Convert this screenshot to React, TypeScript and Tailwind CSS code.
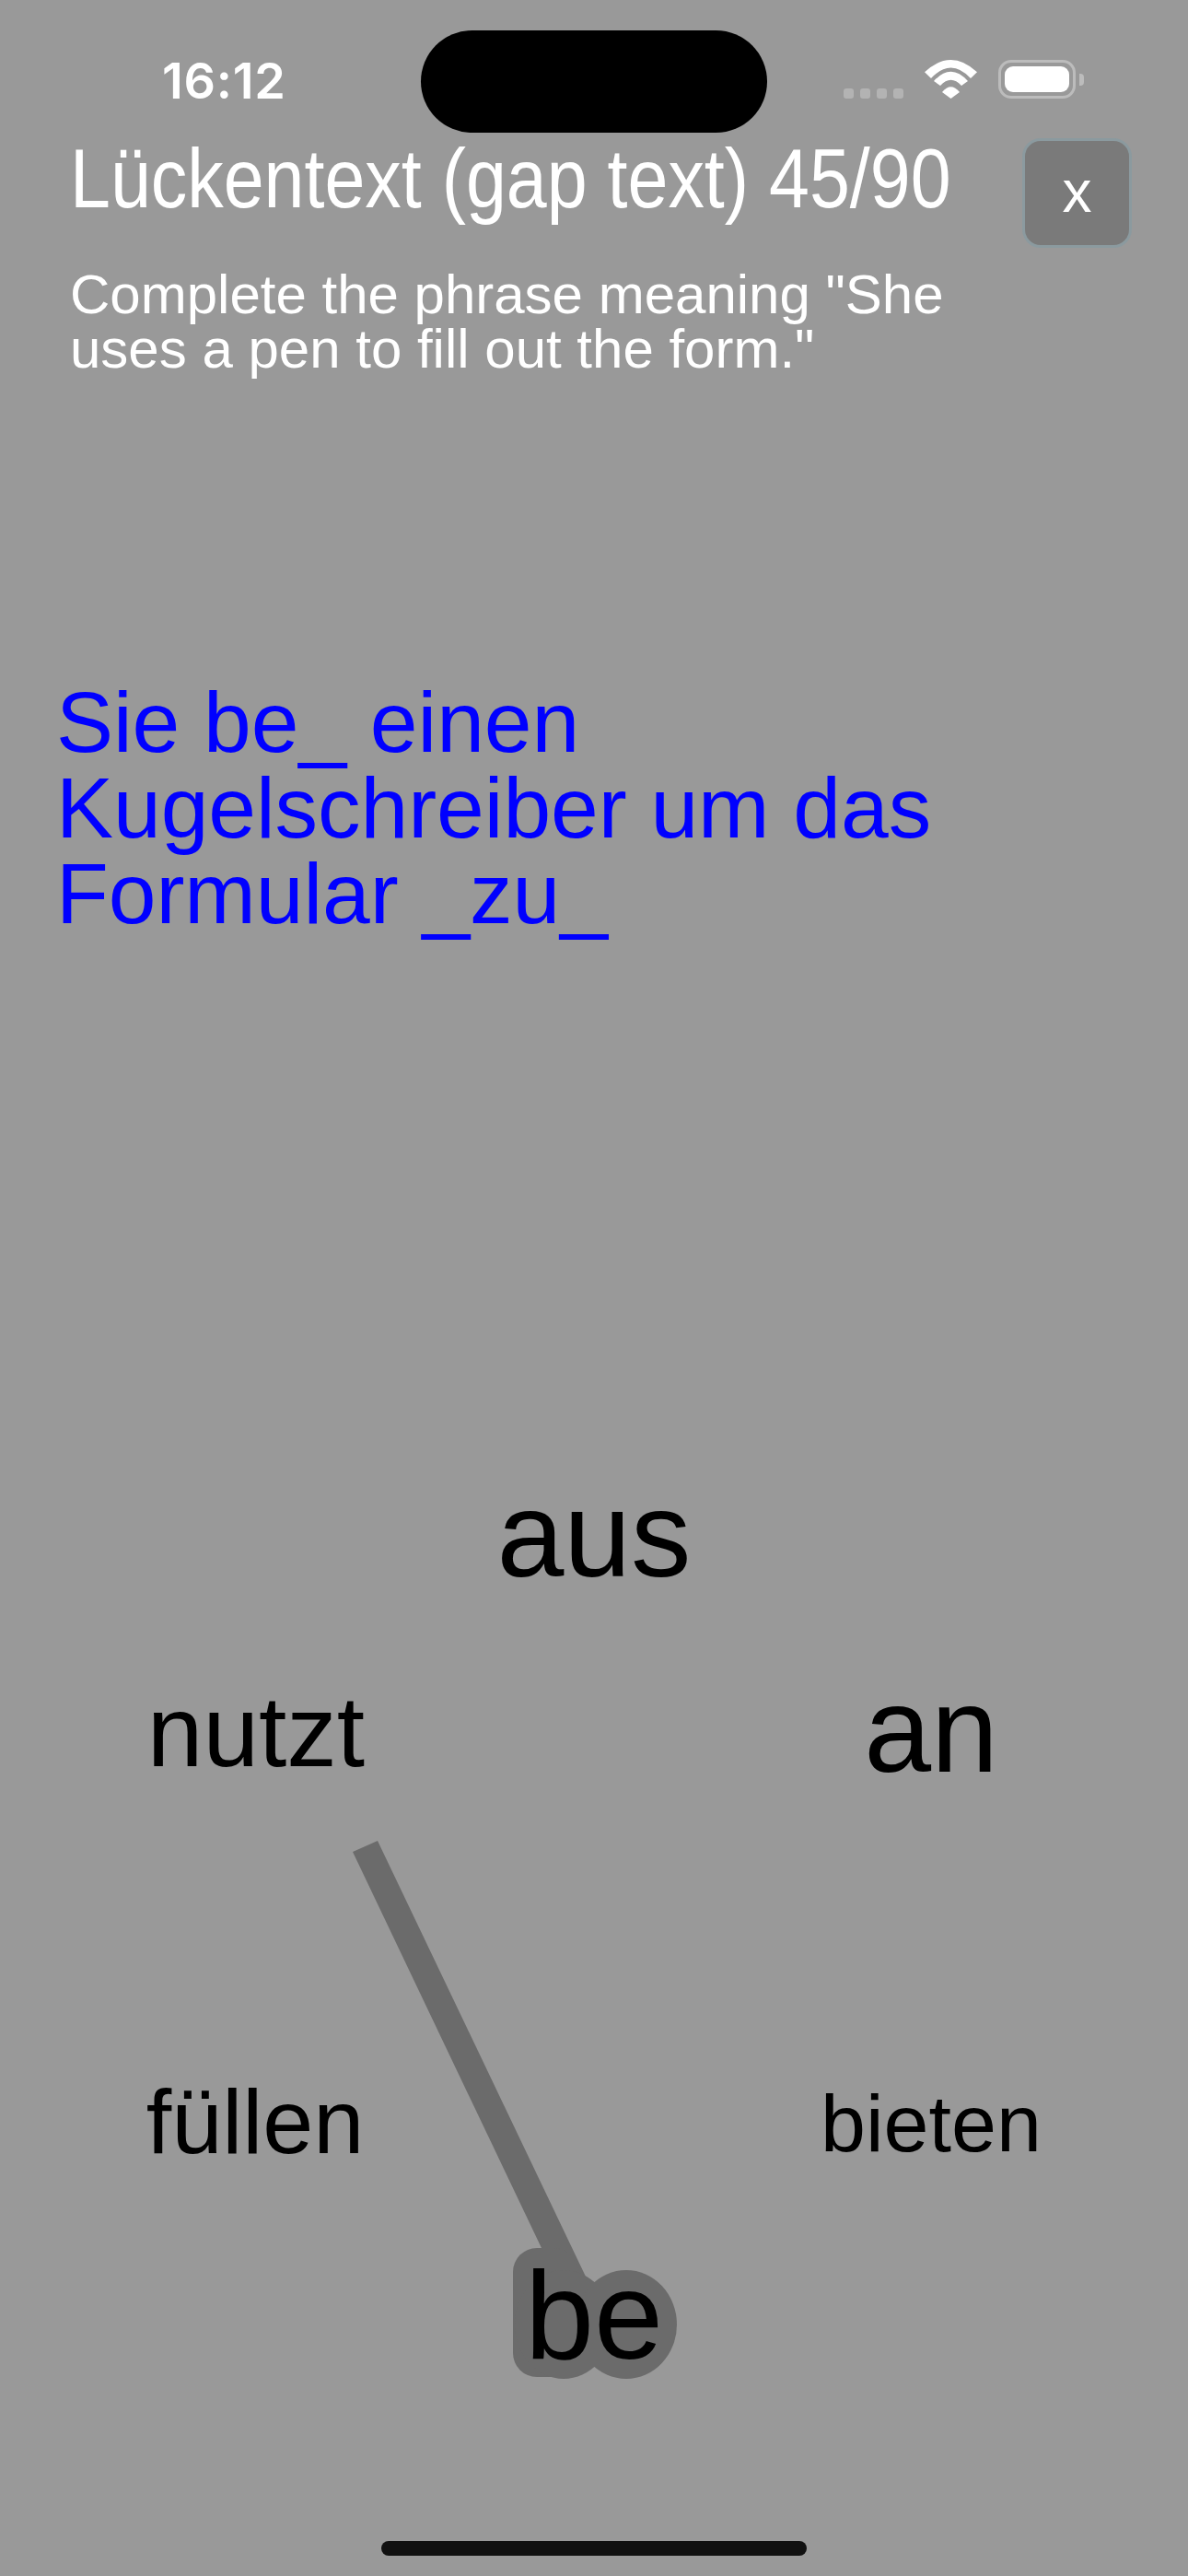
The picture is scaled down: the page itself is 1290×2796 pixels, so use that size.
export default function App() {
  return (
    <div className="relative flex h-[2796px] w-[1290px] flex-col overflow-hidden bg-[#999999] font-['Liberation_Sans',Arial,sans-serif]">
      {/* Status bar */}
      <div className="flex h-[150px] shrink-0 items-start justify-between pl-[176px] pr-[113px]">
        <span className="mt-[56px] font-['Inter',sans-serif] text-[54px] leading-[64px] font-semibold tracking-[0.7px] text-white">16:12</span>
        <div className="mt-[65px] flex h-[42px] items-end">
          <div className="flex items-end gap-[7px]">
            <span className="h-[11px] w-[11px] rounded-[3px] bg-[#b3b3b3]" />
            <span className="h-[11px] w-[11px] rounded-[3px] bg-[#b3b3b3]" />
            <span className="h-[11px] w-[11px] rounded-[3px] bg-[#b3b3b3]" />
            <span className="h-[11px] w-[11px] rounded-[3px] bg-[#b3b3b3]" />
          </div>
          <svg className="ml-[23px]" width="57" height="42" viewBox="0 0 57 42">
            <path fill="#ffffff" d="M0 13.3Q28.5 -13.3 57 13.3L50 20Q28.5 -3 7 20Z" />
            <path fill="#ffffff" d="M10 23Q28.5 2.4 47 23L40 28Q28.5 15.4 17 28Z" />
            <path fill="#ffffff" d="M19 35Q28.5 23.6 38 35L28.5 42Z" />
          </svg>
          <div className="ml-[23px] flex h-[42px] items-center">
            <div className="h-[42px] w-[84px] rounded-[14px] border-[3px] border-[#bcbcbc] p-[4px]">
              <div className="h-full w-full rounded-[9px] bg-white" />
            </div>
            <div className="ml-[4px] h-[13px] w-[5px] rounded-r-[4px] bg-[#bcbcbc]" />
          </div>
        </div>
      </div>

      {/* Header */}
      <div className="flex shrink-0 items-start justify-between pl-[76px] pr-[61px]">
        <h1 className="-mt-[1px] w-[960px] origin-left scale-x-[0.877] text-[90px] leading-[90px] font-normal whitespace-nowrap text-white">Lückentext (gap text) 45/90</h1>
        <button className="flex h-[119px] w-[119px] items-center justify-center rounded-[20px] border-[3px] border-[#8b9a9f] bg-[#7a7a7a] pb-[4px] text-[64px] leading-none text-white">x</button>
      </div>
      <p className="mt-[21px] w-[1040px] shrink-0 pl-[76px] text-[60px] leading-[59px] text-white">Complete the phrase meaning &quot;She uses a pen to fill out the form.&quot;</p>

      <p className="mt-[330px] w-[1040px] shrink-0 pl-[61px] text-[93px] leading-[93px] tracking-[-0.05px] text-[#0000ff]">Sie be_ einen Kugelschreiber um das Formular _zu_</p>

      {/* Word wheel */}
      <div className="relative mt-auto h-[1396px] shrink-0 text-black">
        <svg className="absolute inset-0" width="1290" height="1396" viewBox="0 0 1290 1396">
          <path fill="#6b6b6b" d="M383 610L410 598L636 1071L650 1080L640 1120L600 1120L588 1040Z" />
          <rect x="557" y="1040" width="70" height="140" rx="26" fill="#6b6b6b" />
          <ellipse cx="612" cy="1123" rx="53" ry="59" fill="#6b6b6b" />
          <ellipse cx="680" cy="1123" rx="55" ry="59" fill="#6b6b6b" />
        </svg>
        <span className="absolute top-[200px] left-[645px] -translate-x-1/2 text-[131px] leading-none">aus</span>
        <span className="absolute top-[425px] left-[278px] -translate-x-1/2 text-[109px] leading-none">nutzt</span>
        <span className="absolute top-[412px] left-[1011px] -translate-x-1/2 text-[131px] leading-none">an</span>
        <span className="absolute top-[853px] left-[277px] -translate-x-1/2 text-[99px] leading-none">füllen</span>
        <span className="absolute top-[861px] left-[1011px] -translate-x-1/2 text-[88px] leading-none">bieten</span>
        <span className="absolute top-[1046px] left-[645px] -translate-x-1/2 text-[135px] leading-none">be</span>
      </div>

      {/* Dynamic island and home indicator */}
      <div className="absolute top-[33px] left-[457px] h-[111px] w-[376px] rounded-[56px] bg-black" />
      <div className="absolute top-[2758px] left-[414px] h-[16px] w-[462px] rounded-full bg-[#111111]" />
    </div>
  );
}
